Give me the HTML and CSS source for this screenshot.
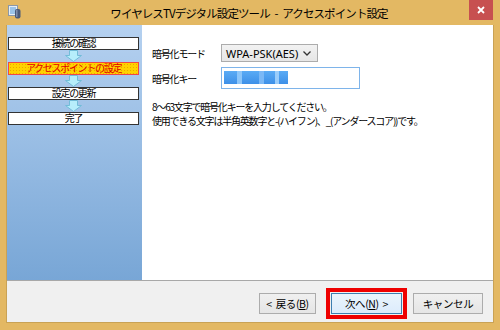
FILE: index.html
```html
<!DOCTYPE html>
<html lang="ja">
  <head>
    <meta charset="utf-8" />
    <title>アクセスポイント設定</title>
    <link rel="stylesheet" href="styles.css">
  </head>
  <body>
    <div class="window">
      <div class="titlebar">
        <svg class="app-icon" width="13" height="14" viewBox="0 0 13 14">
          <rect x="0.5" y="0.5" width="9" height="10" fill="#e8eef4" stroke="#8a98a8" />
          <rect x="2" y="2" width="6" height="7" fill="#9cc4e8" />
          <rect x="7" y="4" width="5.5" height="9.5" rx="2" fill="#4a5a78" />
          <rect x="8" y="5" width="1.5" height="7" fill="#7c8cac" />
        </svg>
        <div class="title">ワイヤレスTVデジタル設定ツール - アクセスポイント設定</div>
        <div class="close">
          <svg width="10" height="10" viewBox="0 0 10 10">
            <path d="M2 2 L8 8 M8 2 L2 8" stroke="#fff" stroke-width="1.8" />
          </svg>
        </div>
      </div>

      <div class="client">
        <div class="main">
          <div class="steps">
            <div class="step">接続の確認</div>
            <svg class="arrow" width="131" height="12" viewBox="0 0 131 12">
              <path d="M61.5 0.5 H69.5 V5.5 H73.5 L65.5 11.5 L57.5 5.5 H61.5 Z" fill="#b6eefb" stroke="#72bcd8" />
            </svg>
            <div class="step current">アクセスポイントの設定</div>
            <svg class="arrow" width="131" height="12" viewBox="0 0 131 12">
              <path d="M61.5 0.5 H69.5 V5.5 H73.5 L65.5 11.5 L57.5 5.5 H61.5 Z" fill="#b6eefb" stroke="#72bcd8" />
            </svg>
            <div class="step">設定の更新</div>
            <svg class="arrow" width="131" height="12" viewBox="0 0 131 12">
              <path d="M61.5 0.5 H69.5 V5.5 H73.5 L65.5 11.5 L57.5 5.5 H61.5 Z" fill="#b6eefb" stroke="#72bcd8" />
            </svg>
            <div class="step">完了</div>
          </div>

          <div class="content">
            <div class="form">
              <label>暗号化モード</label>
              <div class="select">
                <span>WPA-PSK(AES)</span>
                <svg width="8" height="5" viewBox="0 0 8 5">
                  <path d="M0.5 0.5 L4 4 L7.5 0.5" fill="none" stroke="#333" stroke-width="1.3" />
                </svg>
              </div>
              <label>暗号化キー</label>
              <div class="input"><span class="masked"></span></div>
            </div>
            <p class="note">
              8～63文字で暗号化キーを入力してください。<br />
              使用できる文字は半角英数字と-(ハイフン)、_(アンダースコア))です。
            </p>
          </div>
        </div>

        <div class="footer">
          <button class="btn back">&lt; 戻る(<u>B</u>)</button>
          <button class="btn next">次へ(<u>N</u>) &gt;</button>
          <button class="btn cancel">キャンセル</button>
        </div>
      </div>
    </div>
  </body>
</html>
```

FILE: styles.css
```css
html,
body {
  margin: 0;
  background: #e3b863;
}

body {
  font-family: "Noto Sans CJK JP", "Noto Sans", sans-serif;
  color: #000;
}

.window {
  width: 500px;
  height: 330px;
  display: flex;
  flex-direction: column;
  background: #e3b863;
}

.titlebar {
  height: 25px;
  display: flex;
  align-items: flex-start;
}

.app-icon {
  margin: 5px 0 0 8px;
}

.title {
  flex: 1;
  text-align: center;
  padding-left: 8px;
  font-size: 11.5px;
  letter-spacing: -0.9px;
  word-spacing: 3px;
  line-height: 26px;
  color: #000;
}

.close {
  width: 24px;
  height: 20px;
  margin-right: 7px;
  background: #c75050;
  display: flex;
  align-items: center;
  justify-content: center;
}

.client {
  flex: 1;
  display: flex;
  flex-direction: column;
  margin: 0 6px 7px 6px;
  border: 1px solid #c9a255;
  border-top: none;
  background: #f0f0f0;
}

.main {
  height: 255px;
  display: flex;
}

.steps {
  width: 135px;
  padding: 12px 0 0 1px;
  box-sizing: border-box;
  background: linear-gradient(#b5d1f0, #78a6d6);
}

.step {
  width: 131px;
  height: 13px;
  box-sizing: border-box;
  border: 1px solid #333;
  background: #fff;
  display: flex;
  align-items: center;
  justify-content: center;
  padding-bottom: 1px;
  font-size: 10px;
  line-height: 10px;
  letter-spacing: -1.3px;
}

.step.current {
  border-color: #f04848;
  color: #e00000;
  background-color: #ffd200;
  background-image: radial-gradient(#f0a400 0.6px, transparent 0.7px);
  background-size: 3px 3px;
}

.arrow {
  display: block;
}

.content {
  flex: 1;
  background: #fff;
  padding: 19px 0 0 10px;
  font-size: 10px;
  letter-spacing: -1.2px;
}

.form {
  display: grid;
  grid-template-columns: 69px auto;
  row-gap: 5px;
  align-items: center;
  justify-items: start;
}

.select {
  width: 97px;
  height: 18px;
  box-sizing: border-box;
  border: 1px solid #acacac;
  background: linear-gradient(#f2f2f2, #e6e6e6);
  display: flex;
  align-items: center;
  justify-content: space-between;
  padding: 0 6px 0 4px;
  font-family: "Noto Sans", sans-serif;
  font-size: 11px;
  letter-spacing: 0;
}

.input {
  width: 139px;
  height: 22px;
  box-sizing: border-box;
  border: 1px solid #7eb4ea;
  padding: 3px 0 0 2px;
}

.masked {
  display: block;
  width: 64px;
  height: 13px;
  background-color: #4c9ef0;
  background-image:
    linear-gradient(90deg, transparent 20%, #8cc6fa 20%, #8cc6fa 28%, transparent 28%, transparent 55%, #7ab8f6 55%, #7ab8f6 62%, transparent 62%, transparent 80%, #9acdfb 80%, #9acdfb 86%, transparent 86%),
    linear-gradient(#5aabf5, #3d90e8);
}

.note {
  margin: 11px 0 0;
  line-height: 14px;
}

.footer {
  flex: 1;
  border-top: 1px solid #a8a8a8;
  display: flex;
  justify-content: flex-end;
  align-items: flex-start;
  padding: 12px 10px 0 0;
}

.btn {
  height: 21px;
  box-sizing: border-box;
  border: 1px solid #acacac;
  background: linear-gradient(#f0f0f0, #e5e5e5);
  font-family: "Noto Sans CJK JP", sans-serif;
  font-size: 10.5px;
  letter-spacing: -0.4px;
  word-spacing: 2px;
  padding: 0;
  color: #000;
}

.btn.back {
  width: 57px;
  margin-right: 15px;
}

.btn.next {
  width: 71px;
  margin-right: 11px;
  border-color: #3c7fb1;
  background: linear-gradient(#eaf4fc, #dcecfc);
  outline: 4px solid #ee0000;
  outline-offset: 1px;
}

.btn.cancel {
  width: 70px;
}
```
